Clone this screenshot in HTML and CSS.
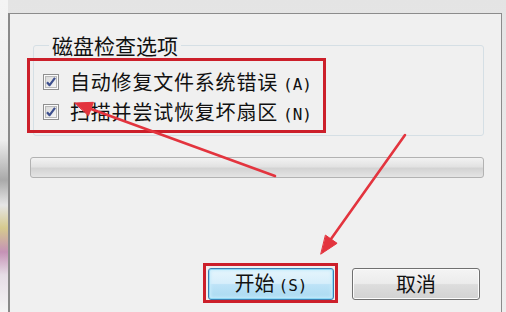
FILE: index.html
```html
<!DOCTYPE html>
<html lang="zh-CN">
<head>
<meta charset="utf-8">
<title>磁盘检查选项</title>
<link rel="stylesheet" href="styles.css">
</head>
<body>
<div class="dialog">
  <fieldset class="group">
    <legend class="group-title">磁盘检查选项</legend>
    <label class="opt">
      <span class="cb"><svg viewBox="0 0 16 16" width="16" height="16"><defs><linearGradient id="cbg" x1="0" y1="0" x2="1" y2="1"><stop offset="0" stop-color="#d9d9d9"/><stop offset="1" stop-color="#f7f7f7"/></linearGradient></defs><rect x="0.5" y="0.5" width="15" height="15" fill="#fbfbfb" stroke="#8f8f8f"/><rect x="2.5" y="2.5" width="11" height="11" fill="url(#cbg)" stroke="#b9b9b9"/><path d="M4 8.2 L6.6 11.2 L12 3.8" fill="none" stroke="#3d4f8e" stroke-width="2.2" stroke-linejoin="round"/></svg></span>
      <span class="opt-text">自动修复文件系统错误<span class="key">(A)</span></span>
    </label>
    <label class="opt">
      <span class="cb"><svg viewBox="0 0 16 16" width="16" height="16"><rect x="0.5" y="0.5" width="15" height="15" fill="#fbfbfb" stroke="#8f8f8f"/><rect x="2.5" y="2.5" width="11" height="11" fill="url(#cbg)" stroke="#b9b9b9"/><path d="M4 8.2 L6.6 11.2 L12 3.8" fill="none" stroke="#3d4f8e" stroke-width="2.2" stroke-linejoin="round"/></svg></span>
      <span class="opt-text">扫描并尝试恢复坏扇区<span class="key">(N)</span></span>
    </label>
  </fieldset>
  <div class="progress"></div>
  <div class="buttons">
    <button class="btn btn-primary">开始<span class="key">(S)</span></button>
    <button class="btn">取消</button>
  </div>
</div>

<div class="mark mark-options"></div>
<div class="mark mark-start"></div>
<svg class="arrows" width="506" height="312" viewBox="0 0 506 312">
  <g stroke="#e3343e" stroke-width="2.6" stroke-linecap="round" fill="#e3343e">
    <line x1="275" y1="176" x2="91" y2="109"/>
    <polygon stroke-width="1" points="75,103 93.4,102.3 88.6,115.4"/>
    <line x1="405" y1="135" x2="331" y2="239"/>
    <polygon stroke-width="1" points="321,254 337.1,243.3 325.7,235.3"/>
  </g>
</svg>
</body>
</html>
```

FILE: styles.css
```css
html, body {
  margin: 0;
  padding: 0;
}
body {
  width: 506px;
  height: 312px;
  overflow: hidden;
  position: relative;
  font-family: "Noto Sans CJK SC", "Noto Sans", sans-serif;
  color: #111;
  background:
    linear-gradient(to bottom, #f4f4f4 0, #eeeeee 140px, #a9a9a9 180px, #e6e6e6 205px, #d6ca8e 228px, #c592b6 252px, #e6dde6 275px, #f4f4f4 312px) left top / 8px 100% no-repeat,
    linear-gradient(to bottom, #e4e4e4, #eeeeee) #ebebeb;
  padding-top: 13px;
  box-sizing: border-box;
}
.dialog {
  margin-left: 8px;
  width: 494px;
  height: 310px;
  box-sizing: border-box;
  border: 1px solid #8c8c8c;
  border-bottom: none;
  border-left: 2px solid #8a8a8a;
  background: #f0f0f0;
  padding: 20px 17px 0 20px;
  display: flex;
  flex-direction: column;
}
.group {
  margin: 0 0 0 3px;
  padding: 11px 0 8px 9px;
  border: 1px solid #d5dfe5;
  border-radius: 3px;
  display: flex;
  flex-direction: column;
  min-width: 0;
}
.group-title {
  font-size: 21px;
  line-height: 22px;
  padding: 0 3px;
  margin-left: 6px;
}
.opt {
  height: 30px;
  display: flex;
  align-items: center;
  gap: 11px;
  font-size: 20px;
  letter-spacing: 0.8px;
}
.cb {
  width: 16px;
  height: 16px;
  display: block;
  flex: none;
}
.cb svg {
  display: block;
}
.opt-text {
  line-height: 24px;
  position: relative;
  top: 1px;
}
.key {
  font-family: "DejaVu Sans Mono", "Liberation Mono", monospace;
  font-size: 16px;
  margin-left: 5px;
  letter-spacing: 0;
}
.progress {
  margin-top: 21px;
  height: 21px;
  box-sizing: border-box;
  border: 1px solid #b2b2b2;
  border-radius: 3px;
  background: linear-gradient(to bottom, #f2f2f2 0, #e2e2e2 45%, #d3d3d3 55%, #e4e4e4 100%);
}
.buttons {
  margin-top: 90px;
  display: flex;
  justify-content: flex-end;
  gap: 18px;
  padding-right: 4px;
}
.btn {
  width: 128px;
  height: 32px;
  box-sizing: border-box;
  border: 1px solid #707070;
  border-radius: 3px;
  font-family: "Noto Sans CJK SC", "Noto Sans", sans-serif;
  font-size: 20px;
  line-height: 28px;
  color: #111;
  padding: 0;
  background: linear-gradient(to bottom, #f4f4f4 0, #ececec 48%, #dddddd 52%, #d2d2d2 100%);
  box-shadow: inset 0 0 0 1px #fcfcfc;
}
.btn-primary {
  width: 126px;
  border-color: #3c7fb1;
  background: linear-gradient(to bottom, #e6f5fc 0, #d6eefb 48%, #bde3f7 52%, #a9d9f1 100%);
  box-shadow: inset 0 0 0 1px #8ed8f5, inset 0 0 3px 2px #c8ecfb;
}
.btn-primary .key {
  margin-left: 4px;
}
.mark {
  position: absolute;
  border: 3px solid #cc1f2a;
  box-sizing: border-box;
}
.mark-options {
  left: 27px;
  top: 58px;
  width: 299px;
  height: 75px;
}
.mark-start {
  left: 203px;
  top: 263px;
  width: 135px;
  height: 40px;
}
.arrows {
  position: absolute;
  left: 0;
  top: 0;
}
```
